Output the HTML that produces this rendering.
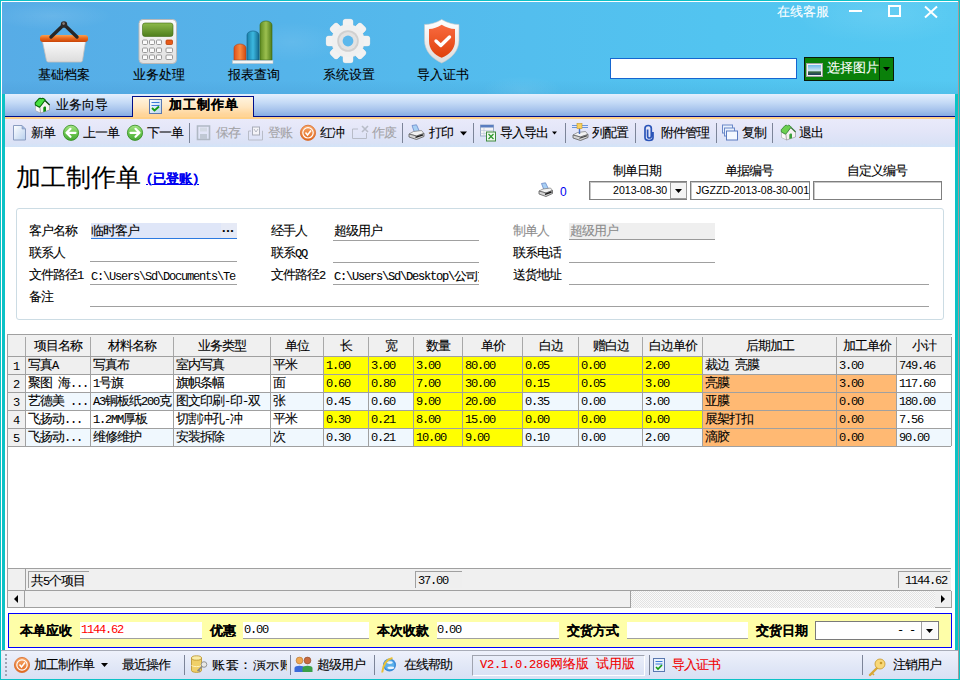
<!DOCTYPE html>
<html><head><meta charset="utf-8">
<style>
@font-face{font-family:"GA";src:local("Liberation Mono");size-adjust:95%;unicode-range:U+0020-007F;}
html,body{margin:0;padding:0;}
body{width:960px;height:680px;position:relative;overflow:hidden;background:#0CC2C6;font-family:"Liberation Sans",sans-serif;font-size:12px;color:#000;}
.a{position:absolute;}
.t{position:absolute;white-space:nowrap;line-height:1;font-family:"GA","Liberation Sans",sans-serif;font-size:12.5px;letter-spacing:-1px;-webkit-text-stroke:0.1px currentColor;}
svg{position:absolute;overflow:visible;}
.mono{font-family:"GA","Liberation Sans",sans-serif;}
.num{-webkit-text-stroke:0;}
/* header */
#hdr{left:1px;top:1px;width:957px;height:93px;background:#fff;}
#sky{left:2px;top:2px;width:956px;height:92px;background:radial-gradient(ellipse 60px 14px at 50px 14px,rgba(255,255,255,0.10),rgba(255,255,255,0) 100%),radial-gradient(ellipse 50px 20px at 290px 40px,rgba(255,255,255,0.08),rgba(255,255,255,0) 100%),radial-gradient(ellipse 90px 30px at 880px 12px,rgba(255,255,255,0.10),rgba(255,255,255,0) 100%),radial-gradient(ellipse 40px 14px at 520px 88px,rgba(255,255,255,0.08),rgba(255,255,255,0) 100%),linear-gradient(rgba(0,60,120,0) 85%,rgba(0,60,120,0.06) 100%),linear-gradient(90deg,#57ACE6 0%,#55B4EA 30%,#53BEEE 55%,#52C4F0 75%,#55C9F2 100%);}
.hl{font-size:13px;color:#000;font-weight:500;letter-spacing:0;}
/* tabs */
#tabbar{left:5px;top:94px;width:950px;height:25px;background:linear-gradient(#E4EFFD,#C4DAF6 35%,#A0BEEA 70%,#86ACE3 88%);}
#tabline{left:5px;top:116px;width:127px;height:1px;background:#000E8A;}
#tabline2{left:253px;top:116px;width:702px;height:1px;background:#000E8A;}
#tabpeach{left:5px;top:117px;width:950px;height:2px;background:#FFD088;}
#acttab{left:132px;top:96px;width:120px;height:20px;border:1px solid #000E8A;border-bottom:none;background:linear-gradient(#FFF4E0,#FFE6C0 50%,#FFD69C 85%,#FFD496);}
/* toolbar */
#tool{left:5px;top:119px;width:950px;height:28px;background:linear-gradient(#E9EAFA,#E4E6F8 40%,#DAE2F6 85%,#D2E4F8);}
.tb{color:#000;}
.dis{color:#A4A4A8;}
.sep{position:absolute;width:1px;height:20px;background:#8A93A8;border-right:1px solid #fff;top:123px;}
/* content */
#content{left:5px;top:147px;width:950px;height:503px;background:#fff;}
</style></head><body>
<div class="a" id="hdr"></div>
<div class="a" id="sky"></div>
<div class="a" id="tabbar"></div>
<div class="a" id="tabline"></div><div class="a" id="tabline2"></div>
<div class="a" id="tabpeach"></div>
<div class="a" id="acttab"></div>
<div class="a" id="tool"></div>
<div class="a" id="content"></div>


<!-- header icons -->
<svg style="left:0;top:0" width="960" height="94" viewBox="0 0 960 94">
 <defs>
  <linearGradient id="bkbody" x1="0" y1="0" x2="0" y2="1"><stop offset="0" stop-color="#FAFAFA"/><stop offset="1" stop-color="#DCDCDC"/></linearGradient>
  <linearGradient id="bkrim" x1="0" y1="0" x2="0" y2="1"><stop offset="0" stop-color="#F8A050"/><stop offset="0.45" stop-color="#EC6A1C"/><stop offset="1" stop-color="#C84408"/></linearGradient>
  <linearGradient id="calc" x1="0" y1="0" x2="0" y2="1"><stop offset="0" stop-color="#FAFAFA"/><stop offset="1" stop-color="#E0E0E0"/></linearGradient>
  <linearGradient id="scr" x1="0" y1="0" x2="0" y2="1"><stop offset="0" stop-color="#8DBA4A"/><stop offset="1" stop-color="#4E7E1C"/></linearGradient>
  <linearGradient id="bo" x1="0" y1="0" x2="1" y2="0"><stop offset="0" stop-color="#E0501A"/><stop offset="0.5" stop-color="#F88A40"/><stop offset="1" stop-color="#D04A10"/></linearGradient>
  <linearGradient id="bb" x1="0" y1="0" x2="1" y2="0"><stop offset="0" stop-color="#1A7FA8"/><stop offset="0.5" stop-color="#3CB8E0"/><stop offset="1" stop-color="#146A90"/></linearGradient>
  <linearGradient id="bg" x1="0" y1="0" x2="1" y2="0"><stop offset="0" stop-color="#5E8A20"/><stop offset="0.5" stop-color="#9CC050"/><stop offset="1" stop-color="#4E7A18"/></linearGradient>
  <linearGradient id="shO" x1="0" y1="0" x2="0" y2="1"><stop offset="0" stop-color="#F86A40"/><stop offset="1" stop-color="#E0400A"/></linearGradient>
  <linearGradient id="shW" x1="0" y1="0" x2="0" y2="1"><stop offset="0" stop-color="#FFFFFF"/><stop offset="1" stop-color="#DCDCDC"/></linearGradient>
 </defs>
 <!-- basket -->
 <path d="M42.5 41.5 L85.5 41.5 L82.5 60.5 Q82.2 62 80.5 62 L48.5 62 Q46.8 62 46.5 60.5 Z" fill="url(#bkbody)" stroke="#C8C0BC" stroke-width="0.8"/>
 <rect x="40" y="35" width="48" height="7" rx="3" fill="url(#bkrim)"/>
 <path d="M51 37 L64 24.5 L77 37" fill="none" stroke="#262626" stroke-width="3.4" stroke-linecap="round" stroke-linejoin="round"/>
 <circle cx="64" cy="24.5" r="3.2" fill="#2E2A28"/><circle cx="63.6" cy="23.6" r="1.3" fill="#8A7E78"/>
 <!-- calculator -->
 <rect x="139" y="19.5" width="37.5" height="44" rx="4" fill="url(#calc)" stroke="#B8B8B8" stroke-width="1"/>
 <rect x="142.5" y="23" width="30.5" height="13.5" rx="2.5" fill="url(#scr)" stroke="#3E6A12" stroke-width="0.6"/>
 <g fill="#FBFBFB" stroke="#8E8E8E" stroke-width="0.9">
  <rect x="142.5" y="40" width="5" height="4.5" rx="1"/><rect x="149.5" y="40" width="5" height="4.5" rx="1"/><rect x="156.5" y="40" width="5" height="4.5" rx="1"/>
  <rect x="142.5" y="48" width="5" height="4.5" rx="1"/><rect x="149.5" y="48" width="5" height="4.5" rx="1"/><rect x="156.5" y="48" width="5" height="4.5" rx="1"/><rect x="166" y="48" width="6.5" height="4.5" rx="1"/>
  <rect x="142.5" y="55" width="5" height="4.5" rx="1"/><rect x="149.5" y="55" width="5" height="4.5" rx="1"/><rect x="156.5" y="55" width="5" height="4.5" rx="1"/><rect x="166" y="55" width="6.5" height="4.5" rx="1"/>
 </g>
 <rect x="166" y="40" width="6.5" height="4.5" rx="1" fill="#E85A18" stroke="#B84008" stroke-width="0.8"/>
 <!-- chart -->
 <path d="M234 60 V48 a6 4 0 0 1 12 0 V60 Z" fill="url(#bo)" stroke="#B84010" stroke-width="0.6"/>
 <path d="M247 60 V35 a6 4 0 0 1 12 0 V60 Z" fill="url(#bb)" stroke="#0E5A80" stroke-width="0.6"/>
 <path d="M260 60 V25 a6 4 0 0 1 12 0 V60 Z" fill="url(#bg)" stroke="#3E6A10" stroke-width="0.6"/>
 <rect x="232.5" y="60.5" width="40.5" height="3" fill="#F4F4F4" stroke="#C0C0C0" stroke-width="0.5"/>
 <!-- gear -->
 <defs><linearGradient id="gearg" x1="0" y1="0" x2="0" y2="1"><stop offset="0" stop-color="#FAFAFA"/><stop offset="1" stop-color="#E4E4E4"/></linearGradient></defs>
 <g transform="translate(348 41)">
  <g fill="url(#gearg)" stroke="#D8D8D8" stroke-width="0.5"><rect x="-5" y="-21.8" width="10" height="9" rx="2.5" transform="rotate(0)"/><rect x="-5" y="-21.8" width="10" height="9" rx="2.5" transform="rotate(45)"/><rect x="-5" y="-21.8" width="10" height="9" rx="2.5" transform="rotate(90)"/><rect x="-5" y="-21.8" width="10" height="9" rx="2.5" transform="rotate(135)"/><rect x="-5" y="-21.8" width="10" height="9" rx="2.5" transform="rotate(180)"/><rect x="-5" y="-21.8" width="10" height="9" rx="2.5" transform="rotate(225)"/><rect x="-5" y="-21.8" width="10" height="9" rx="2.5" transform="rotate(270)"/><rect x="-5" y="-21.8" width="10" height="9" rx="2.5" transform="rotate(315)"/><circle r="16.5"/></g>
  <g fill="#F2F2F2"><rect x="-5" y="-21.8" width="10" height="9.5" rx="2.5" style="stroke:none" transform="rotate(0)"/><rect x="-5" y="-21.8" width="10" height="9.5" rx="2.5" style="stroke:none" transform="rotate(45)"/><rect x="-5" y="-21.8" width="10" height="9.5" rx="2.5" style="stroke:none" transform="rotate(90)"/><rect x="-5" y="-21.8" width="10" height="9.5" rx="2.5" style="stroke:none" transform="rotate(135)"/><rect x="-5" y="-21.8" width="10" height="9.5" rx="2.5" style="stroke:none" transform="rotate(180)"/><rect x="-5" y="-21.8" width="10" height="9.5" rx="2.5" style="stroke:none" transform="rotate(225)"/><rect x="-5" y="-21.8" width="10" height="9.5" rx="2.5" style="stroke:none" transform="rotate(270)"/><rect x="-5" y="-21.8" width="10" height="9.5" rx="2.5" style="stroke:none" transform="rotate(315)"/></g>
  <circle r="16" fill="#F0F0F0"/>
  <circle r="10.8" fill="#D0D0D0"/>
  <circle r="9" fill="#E2E2E2"/>
  <circle r="5.4" fill="#5CB8EC"/>
 </g>
 <!-- shield -->
 <path d="M441.7 19.5 C436 23 430 24.5 424.5 24.5 L424.5 40 C424.5 51 432 58.5 441.7 63 C451.4 58.5 459 51 459 40 L459 24.5 C453.5 24.5 447.5 23 441.7 19.5 Z" fill="url(#shW)" stroke="#C8C8C8" stroke-width="0.6"/>
 <path d="M441.7 24.8 C437.5 27.5 433.5 29 429 29 L429 41 C429 49 434 54.5 441.7 57.8 C449.4 54.5 455 49 455 41 L455 29 C450.5 29 446 27.5 441.7 24.8 Z" fill="url(#shO)"/>
 <path d="M436 41 L440.8 45.5 L449.5 37" fill="none" stroke="#fff" stroke-width="3.4" stroke-linecap="round" stroke-linejoin="round"/>
 <!-- window controls -->
 <rect x="849" y="10" width="13" height="2" fill="#fff"/>
 <rect x="889" y="6" width="11" height="10" fill="none" stroke="#fff" stroke-width="2"/>
 <path d="M925 6.5 L937 17.5 M937 6.5 L925 17.5" stroke="#fff" stroke-width="2"/>
</svg>
<!-- search + button -->
<div class="a" style="left:610px;top:58px;width:185px;height:19px;background:#fff;border:1px solid #1566D0;"></div>
<div class="a" style="left:804px;top:57px;width:88px;height:22px;background:#0A800A;border:1px solid #0A1A0A;"></div>
<div class="a" style="left:879px;top:58px;width:1px;height:22px;background:#063006;"></div>
<svg style="left:806px;top:63px" width="17" height="14" viewBox="0 0 17 14">
 <defs><linearGradient id="pic" x1="0" y1="0" x2="0" y2="1"><stop offset="0" stop-color="#6FB8E8"/><stop offset="0.55" stop-color="#C8E4F0"/><stop offset="0.7" stop-color="#3A6A40"/><stop offset="1" stop-color="#1E3A60"/></linearGradient></defs>
 <rect x="0.5" y="0.5" width="16" height="13" fill="#F0F0F0" stroke="#A0A0A0"/>
 <rect x="2" y="2" width="13" height="10" fill="url(#pic)"/>
</svg>
<div class="t" style="left:827px;top:63px;font-size:13px;letter-spacing:0;color:#fff">选择图片</div>
<svg style="left:883px;top:67px" width="7" height="4" viewBox="0 0 7 4"><path d="M0 0 L7 0 L3.5 4 Z" fill="#000"/></svg>


<!-- left white frame line -->
<div class="a" style="left:1px;top:1px;width:1px;height:649px;background:#fff"></div>
<div class="a" style="left:958px;top:1px;width:1px;height:678px;background:#A49A98"></div>
<!-- tab contents -->
<svg style="left:32px;top:96px" width="20" height="20" viewBox="0 0 20 20">
 <path d="M3.5 9 L8 11.5 L8.5 17 L3.5 14.5 Z" fill="#FAFAFA" stroke="#9A9A9A" stroke-width="0.5"/>
 <path d="M8 11 L13 4.5 L17.5 9 L17.5 14 L8.5 17 Z" fill="#F6F2F2" stroke="#7A7A7A" stroke-width="0.5"/>
 <path d="M13 4.5 L17.6 9" stroke="#0A4A0A" stroke-width="1.3"/>
 <path d="M11.3 16 L11.3 12 C11.3 10.5 14 10 14 11.5 L14 15.2 Z" fill="#0E8A0E"/>
 <path d="M3.2 6.8 L7 2.6 L8.2 2.2 L9.5 2.8 L10.6 2.2 L12 2.8 L13.2 4 L9 9.5 L7.5 11.2 L3.4 9 Z" fill="#48E040" stroke="#0A6A0A" stroke-width="1.1" stroke-linejoin="round"/>
</svg>
<div class="t" style="left:56px;top:100px;font-size:13px;letter-spacing:0;color:#000">业务向导</div>
<svg style="left:149px;top:99px" width="13" height="15" viewBox="0 0 13 15">
 <defs><linearGradient id="doc" x1="0" y1="0" x2="1" y2="1"><stop offset="0" stop-color="#FFFFFF"/><stop offset="1" stop-color="#B8D4F0"/></linearGradient></defs>
 <rect x="0.5" y="0.5" width="12" height="14" fill="url(#doc)" stroke="#5A78B0"/>
 <rect x="2.5" y="3" width="8" height="1" fill="#3A7AD8"/>
 <rect x="2.5" y="6" width="8" height="1" fill="#3A7AD8"/>
 <path d="M3 9 L5.5 11.5 L10 7.5" fill="none" stroke="#139A13" stroke-width="1.8"/>
</svg>
<div class="t" style="left:169px;top:100px;font-size:13px;font-weight:bold;color:#000;letter-spacing:1.1px">加工制作单</div>


<!-- toolbar -->
<svg style="left:0;top:119px" width="960" height="28" viewBox="0 119 960 28">
 <defs>
  <linearGradient id="gcirc" x1="0" y1="0" x2="0" y2="1"><stop offset="0" stop-color="#A8E488"/><stop offset="0.5" stop-color="#6CC850"/><stop offset="1" stop-color="#48A838"/></linearGradient>
  <linearGradient id="ocirc" x1="0" y1="0" x2="0" y2="1"><stop offset="0" stop-color="#F8A868"/><stop offset="1" stop-color="#E06820"/></linearGradient>
  <linearGradient id="ndoc" x1="0" y1="0" x2="1" y2="1"><stop offset="0" stop-color="#FFFFFF"/><stop offset="1" stop-color="#B8D0EE"/></linearGradient>
 </defs>
 <!-- separators -->
 <g fill="#7C8498">
  <rect x="189" y="123" width="1" height="20"/><rect x="402" y="123" width="1" height="20"/><rect x="473" y="123" width="1" height="20"/>
  <rect x="565" y="123" width="1" height="20"/><rect x="635" y="123" width="1" height="20"/><rect x="716" y="123" width="1" height="20"/><rect x="772" y="123" width="1" height="20"/>
 </g>
 <!-- new doc -->
 <path d="M13.5 125.5 L22 125.5 L25.5 129 L25.5 140 L13.5 140 Z" fill="url(#ndoc)" stroke="#8A9CC0" stroke-width="1"/>
 <path d="M22 125.5 L22 129 L25.5 129" fill="#9AB0D8" stroke="#8A9CC0" stroke-width="0.6"/>
 <!-- prev -->
 <circle cx="71" cy="132.8" r="7.6" fill="url(#gcirc)" stroke="#2E8A1A" stroke-width="0.8"/>
 <path d="M67 132.8 L75.5 132.8 M70.5 128.8 L66.5 132.8 L70.5 136.8" fill="none" stroke="#fff" stroke-width="2.2" stroke-linecap="round" stroke-linejoin="round"/>
 <!-- next -->
 <circle cx="135" cy="132.8" r="7.6" fill="url(#gcirc)" stroke="#2E8A1A" stroke-width="0.8"/>
 <path d="M130.5 132.8 L139 132.8 M135.5 128.8 L139.5 132.8 L135.5 136.8" fill="none" stroke="#fff" stroke-width="2.2" stroke-linecap="round" stroke-linejoin="round"/>
 <!-- save (disabled) -->
 <path d="M197.5 126 L209.5 126 L209.5 139.5 L197.5 139.5 Z" fill="none" stroke="#B0B8C4" stroke-width="1.6"/>
 <rect x="200" y="127.5" width="7" height="4" fill="#D4DAE4"/>
 <rect x="200" y="134" width="7" height="5" fill="#C0C8D4"/>
 <!-- post (disabled) -->
 <path d="M248.5 131 L251 131 M262 131 L262.5 131 L262.5 140 L248.5 140 L248.5 131" fill="none" stroke="#B8BCC8" stroke-width="1"/>
 <rect x="252.5" y="127" width="7" height="8" fill="#F4F4F8" stroke="#A8ACB8" stroke-width="1"/>
 <path d="M254 129 L256 132 L258 129" fill="none" stroke="#A8ACB8" stroke-width="0.8"/>
 <!-- red reverse -->
 <circle cx="308" cy="132.8" r="7.6" fill="url(#ocirc)" stroke="#D86A2A" stroke-width="0.8"/>
 <circle cx="308" cy="132.8" r="5.2" fill="none" stroke="#fff" stroke-width="1.2"/>
 <path d="M305.5 132.5 L307.5 135 L311 130.5" fill="none" stroke="#fff" stroke-width="1.5"/>
 <!-- void (disabled) -->
 <path d="M358 129 L352.5 129 L352.5 138.5 L366.5 138.5 L366.5 133" fill="none" stroke="#B8BCC8" stroke-width="1"/>
 <path d="M362 126 L368 132 M368 126 L362 132" stroke="#B8BCC8" stroke-width="1.6"/>
 <!-- print -->
 <g transform="translate(408 124)">
 <path d="M4 1.5 L8.5 0.8 L11.5 7.5 L6.5 8.5 Z" fill="#A8D0F4" stroke="#6A88C8" stroke-width="0.8"/>
 <path d="M1 10 L5.5 7.5 L13.5 6.5 L16 9.5 L8.5 12 Z" fill="#F2F2F2" stroke="#7A7A7A" stroke-width="0.7"/>
 <path d="M1 10 L8.5 12 L16 9.5 L16 12.5 L8.5 15.5 L1 13 Z" fill="#D4D4D4" stroke="#5A5A5A" stroke-width="0.8"/>
 <path d="M7.5 13.3 L15 10.8" stroke="#1A1A1A" stroke-width="1.4"/>
 </g>
 <path d="M460 131.5 L467 131.5 L463.5 135.5 Z" fill="#000"/>
 <!-- import/export -->
 <rect x="480.5" y="125" width="13" height="11" fill="#F4F4F4" stroke="#9AACC8" stroke-width="1"/>
 <rect x="480.5" y="125" width="13" height="2.5" fill="#5A7EC0"/>
 <path d="M484 127.5 L484 136 M480.5 130.5 L493.5 130.5 M480.5 133.5 L493.5 133.5" stroke="#B8C4D8" stroke-width="0.6"/>
 <rect x="486.5" y="132" width="9" height="9" fill="#F0F8EE" stroke="#3E8A3E" stroke-width="1"/>
 <path d="M488.5 134 L493.5 139 M493.5 134 L488.5 139" stroke="#2E9A2E" stroke-width="1.3"/>
 <path d="M552 131.5 L557 131.5 L554.5 134.5 Z" fill="#000"/>
 <!-- column config -->
 <path d="M572 125.5 L588 125.5 M572 127.5 L588 127.5" stroke="#5A8AD8" stroke-width="0.9"/>
 <g transform="translate(572 125)">
 <path d="M1 10 L5.5 7.5 L13.5 6.5 L16 9.5 L8.5 12 Z" fill="#F2F2F2" stroke="#7A7A7A" stroke-width="0.7"/>
 <path d="M1 10 L8.5 12 L16 9.5 L16 12.5 L8.5 15.5 L1 13 Z" fill="#D4D4D4" stroke="#5A5A5A" stroke-width="0.8"/>
 <path d="M7.5 13.3 L15 10.8" stroke="#3A3A3A" stroke-width="1"/>
 </g>
 <path d="M579.5 128 L579.5 134" stroke="#4A70C0" stroke-width="1.4"/>
 <rect x="577" y="123.5" width="5" height="5" fill="#F8D060" stroke="#C89A20" stroke-width="0.6"/>
 <!-- attach -->
 <path d="M653 132 L653 137.5 Q653 140.5 649 140.5 Q645 140.5 645 137.5 L645 128.2 Q645 125.5 648.3 125.5 Q651.3 125.5 651.3 128.2 L651.3 136.3 Q651.3 138 649.3 138 Q647.6 138 647.6 136.3 L647.6 129.5" fill="none" stroke="#2A54B8" stroke-width="1.7"/>
 <!-- copy -->
 <rect x="722.5" y="125" width="10" height="8" fill="#E8F0FC" stroke="#6A88C8" stroke-width="1"/>
 <rect x="724.5" y="128" width="10" height="8" fill="#E8F0FC" stroke="#6A88C8" stroke-width="1"/>
 <rect x="726.5" y="131" width="11" height="9" fill="#F4F8FF" stroke="#5A7AC0" stroke-width="1"/>
 <!-- exit house -->
 <g transform="translate(778 123)">
 <path d="M3.5 9 L8 11.5 L8.5 17 L3.5 14.5 Z" fill="#FAFAFA" stroke="#9A9A9A" stroke-width="0.5"/>
 <path d="M8 11 L13 4.5 L17.5 9 L17.5 14 L8.5 17 Z" fill="#F6F2F2" stroke="#7A7A7A" stroke-width="0.5"/>
 <path d="M13 4.5 L17.6 9" stroke="#3A7A3A" stroke-width="1.2"/>
 <path d="M11.3 16 L11.3 12 C11.3 10.5 14 10 14 11.5 L14 15.2 Z" fill="#3AA03A"/>
 <path d="M3.2 6.8 L7 2.6 L8.2 2.2 L9.5 2.8 L10.6 2.2 L12 2.8 L13.2 4 L9 9.5 L7.5 11.2 L3.4 9 Z" fill="#6CD050" stroke="#3A8A3A" stroke-width="0.9" stroke-linejoin="round"/>
 </g>
</svg>
<div class="t tb" style="left:31px;top:128px">新单</div>
<div class="t tb" style="left:83px;top:128px">上一单</div>
<div class="t tb" style="left:147px;top:128px">下一单</div>
<div class="t tb dis" style="left:216px;top:128px">保存</div>
<div class="t tb dis" style="left:268px;top:128px">登账</div>
<div class="t tb" style="left:320px;top:128px">红冲</div>
<div class="t tb dis" style="left:372px;top:128px">作废</div>
<div class="t tb" style="left:429px;top:128px">打印</div>
<div class="t tb" style="left:500px;top:128px">导入导出</div>
<div class="t tb" style="left:592px;top:128px">列配置</div>
<div class="t tb" style="left:661px;top:128px">附件管理</div>
<div class="t tb" style="left:742px;top:128px">复制</div>
<div class="t tb" style="left:799px;top:128px">退出</div>


<!-- form title -->
<div class="t" style="left:16px;top:167px;font-size:25px;letter-spacing:0;color:#000;font-weight:500">加工制作单</div>
<div class="t" style="left:146px;top:174px;font-weight:bold;color:#0000F0;text-decoration:underline;letter-spacing:0">(已登账)</div>
<!-- printer small -->
<svg style="left:538px;top:182px" width="18" height="16" viewBox="0 0 18 16">
 <path d="M3.5 1.5 L7.5 0.8 L10.5 7 L6 8 Z" fill="#A8D0F4" stroke="#6A88C8" stroke-width="0.8"/>
 <path d="M1 9 L5 7 L12.5 6 L14.5 8.5 L8 11 Z" fill="#F2F2F2" stroke="#7A7A7A" stroke-width="0.7"/>
 <path d="M1 9 L8 11 L14.5 8.5 L14.5 11.5 L8 14.5 L1 12 Z" fill="#D4D4D4" stroke="#5A5A5A" stroke-width="0.8"/>
 <path d="M7 12.3 L13.5 10" stroke="#1A1A1A" stroke-width="1.4"/>
</svg>
<div class="t num" style="left:560px;top:186px;color:#0000F0;font-family:'Liberation Sans';font-size:12px;letter-spacing:0">0</div>
<div class="t" style="left:613px;top:166px">制单日期</div>
<div class="t" style="left:725px;top:166px">单据编号</div>
<div class="t" style="left:847px;top:166px">自定义编号</div>
<!-- date box -->
<div class="a" style="left:589px;top:181px;width:96px;height:17px;border:1px solid #7F7F7F;box-shadow:inset 1px 1px 0 #C8C8C8;background:#fff"></div>
<div class="t num" style="left:613px;top:185px;font-size:10.6px;letter-spacing:0;font-family:'Liberation Sans'">2013-08-30</div>
<div class="a" style="left:670px;top:182px;width:17px;height:17px;border:1px solid #9A9A9A;background:#F4F4F4;box-sizing:border-box"></div>
<svg style="left:675px;top:189px" width="7" height="4" viewBox="0 0 7 4"><path d="M0 0 L7 0 L3.5 4 Z" fill="#000"/></svg>
<div class="a" style="left:690px;top:181px;width:118px;height:17px;border:1px solid #7F7F7F;box-shadow:inset 1px 1px 0 #C8C8C8;background:#fff"></div>
<div class="t num" style="left:696px;top:185px;font-size:10.6px;letter-spacing:0;font-family:'Liberation Sans'">JGZZD-2013-08-30-001</div>
<div class="a" style="left:813px;top:181px;width:127px;height:17px;border:1px solid #7F7F7F;box-shadow:inset 1px 1px 0 #C8C8C8;background:#fff"></div>
<!-- form box -->
<div class="a" style="left:16px;top:208px;width:926px;height:110px;border:1px solid #CCDCE4;border-radius:3px;"></div>
<div class="t" style="left:29px;top:226px">客户名称</div>
<div class="t" style="left:29px;top:248px">联系人</div>
<div class="t mono" style="left:29px;top:270px">文件路径1</div>
<div class="t" style="left:29px;top:292px">备注</div>
<div class="a" style="left:91px;top:223px;width:146px;height:15px;background:#DFE6F8;border-bottom:1px solid #2C7AE0"></div><div class="a" style="left:221px;top:223px;width:16px;height:15px;background:#E6EAF6"></div>
<div class="t" style="left:91px;top:226px">临时客户</div>
<div class="t" style="left:222px;top:226px;font-weight:bold;letter-spacing:0px">···</div>
<div class="a" style="left:90px;top:261px;width:147px;height:1px;background:#A0A0A0"></div>
<div class="t mono num" style="left:91px;top:271px;width:146px;overflow:hidden">C:\Users\Sd\Documents\Te</div>
<div class="a" style="left:90px;top:284px;width:147px;height:1px;background:#A0A0A0"></div>
<div class="a" style="left:90px;top:306px;width:839px;height:1px;background:#A0A0A0"></div>

<div class="t" style="left:271px;top:226px">经手人</div>
<div class="t" style="left:271px;top:248px">联系QQ</div>
<div class="t mono" style="left:271px;top:270px">文件路径2</div>
<div class="t" style="left:334px;top:226px">超级用户</div>
<div class="a" style="left:333px;top:240px;width:146px;height:1px;background:#A0A0A0"></div>
<div class="a" style="left:333px;top:262px;width:146px;height:1px;background:#A0A0A0"></div>
<div class="t mono" style="left:334px;top:271px;width:145px;overflow:hidden">C:\Users\Sd\Desktop\公司文件</div>
<div class="a" style="left:333px;top:284px;width:146px;height:1px;background:#A0A0A0"></div>

<div class="t" style="left:513px;top:226px;color:#8C8C8C">制单人</div>
<div class="t" style="left:513px;top:248px">联系电话</div>
<div class="t" style="left:513px;top:270px">送货地址</div>
<div class="a" style="left:569px;top:223px;width:146px;height:16px;background:#EFEFEF;border-bottom:1px solid #9A9A9A"></div>
<div class="t" style="left:570px;top:226px;color:#8C8C8C">超级用户</div>
<div class="a" style="left:569px;top:262px;width:146px;height:1px;background:#A0A0A0"></div>
<div class="a" style="left:569px;top:284px;width:360px;height:1px;background:#A0A0A0"></div>

<!-- grid -->
<div class="a" style="left:7px;top:334px;width:944px;height:273px;border:1px solid #A0A0A0;border-right:none;border-bottom:none;background:#fff"></div>
<div class="a" style="left:8px;top:335px;width:943px;height:21px;background:#F0F0F0"></div>
<div class="a" style="left:951px;top:337px;width:1px;height:109px;background:#A0A0A0"></div>
<div class="a" style="left:8px;top:356px;width:943px;height:1px;background:#A0A0A0"></div>
<div class="a" style="left:25px;top:337px;width:1px;height:19px;background:#A8A8A8"></div>
<div class="t" style="left:26px;top:341px;width:64px;text-align:center">项目名称</div>
<div class="a" style="left:90px;top:337px;width:1px;height:19px;background:#A8A8A8"></div>
<div class="t" style="left:91px;top:341px;width:82px;text-align:center">材料名称</div>
<div class="a" style="left:173px;top:337px;width:1px;height:19px;background:#A8A8A8"></div>
<div class="t" style="left:174px;top:341px;width:96px;text-align:center">业务类型</div>
<div class="a" style="left:270px;top:337px;width:1px;height:19px;background:#A8A8A8"></div>
<div class="t" style="left:271px;top:341px;width:52px;text-align:center">单位</div>
<div class="a" style="left:323px;top:337px;width:1px;height:19px;background:#A8A8A8"></div>
<div class="t" style="left:324px;top:341px;width:44px;text-align:center">长</div>
<div class="a" style="left:368px;top:337px;width:1px;height:19px;background:#A8A8A8"></div>
<div class="t" style="left:369px;top:341px;width:44px;text-align:center">宽</div>
<div class="a" style="left:413px;top:337px;width:1px;height:19px;background:#A8A8A8"></div>
<div class="t" style="left:414px;top:341px;width:48px;text-align:center">数量</div>
<div class="a" style="left:462px;top:337px;width:1px;height:19px;background:#A8A8A8"></div>
<div class="t" style="left:463px;top:341px;width:59px;text-align:center">单价</div>
<div class="a" style="left:522px;top:337px;width:1px;height:19px;background:#A8A8A8"></div>
<div class="t" style="left:523px;top:341px;width:55px;text-align:center">白边</div>
<div class="a" style="left:578px;top:337px;width:1px;height:19px;background:#A8A8A8"></div>
<div class="t" style="left:579px;top:341px;width:63px;text-align:center">赠白边</div>
<div class="a" style="left:642px;top:337px;width:1px;height:19px;background:#A8A8A8"></div>
<div class="t" style="left:643px;top:341px;width:59px;text-align:center">白边单价</div>
<div class="a" style="left:702px;top:337px;width:1px;height:19px;background:#A8A8A8"></div>
<div class="t" style="left:703px;top:341px;width:133px;text-align:center">后期加工</div>
<div class="a" style="left:836px;top:337px;width:1px;height:19px;background:#A8A8A8"></div>
<div class="t" style="left:837px;top:341px;width:59px;text-align:center">加工单价</div>
<div class="a" style="left:896px;top:337px;width:1px;height:19px;background:#A8A8A8"></div>
<div class="t" style="left:897px;top:341px;width:54px;text-align:center">小计</div>
<div class="a" style="left:8px;top:357px;width:17px;height:17px;background:#F0F0F0"></div>
<div class="t mono num" style="left:13px;top:361px">1</div>
<div class="a" style="left:26px;top:357px;width:64px;height:17px;background:#EFEFEF"></div>
<div class="t mono" style="left:28px;top:360px">写真A</div>
<div class="a" style="left:91px;top:357px;width:82px;height:17px;background:#EFEFEF"></div>
<div class="t mono" style="left:93px;top:360px">写真布</div>
<div class="a" style="left:174px;top:357px;width:96px;height:17px;background:#EFEFEF"></div>
<div class="t mono" style="left:176px;top:360px">室内写真</div>
<div class="a" style="left:271px;top:357px;width:52px;height:17px;background:#EFEFEF"></div>
<div class="t mono" style="left:273px;top:360px">平米</div>
<div class="a" style="left:324px;top:357px;width:44px;height:17px;background:#FFFF00"></div>
<div class="t mono num" style="left:326px;top:360px">1.00</div>
<div class="a" style="left:369px;top:357px;width:44px;height:17px;background:#FFFF00"></div>
<div class="t mono num" style="left:371px;top:360px">3.00</div>
<div class="a" style="left:414px;top:357px;width:48px;height:17px;background:#FFFF00"></div>
<div class="t mono num" style="left:416px;top:360px">3.00</div>
<div class="a" style="left:463px;top:357px;width:59px;height:17px;background:#FFFF00"></div>
<div class="t mono num" style="left:465px;top:360px">80.00</div>
<div class="a" style="left:523px;top:357px;width:55px;height:17px;background:#FFFF00"></div>
<div class="t mono num" style="left:525px;top:360px">0.05</div>
<div class="a" style="left:579px;top:357px;width:63px;height:17px;background:#FFFF00"></div>
<div class="t mono num" style="left:581px;top:360px">0.00</div>
<div class="a" style="left:643px;top:357px;width:59px;height:17px;background:#FFFF00"></div>
<div class="t mono num" style="left:645px;top:360px">2.00</div>
<div class="a" style="left:703px;top:357px;width:133px;height:17px;background:#EFEFEF"></div>
<div class="t mono" style="left:705px;top:360px">裁边 亮膜</div>
<div class="a" style="left:837px;top:357px;width:59px;height:17px;background:#EFEFEF"></div>
<div class="t mono num" style="left:839px;top:360px">3.00</div>
<div class="a" style="left:897px;top:357px;width:54px;height:17px;background:#EFEFEF"></div>
<div class="t mono num" style="left:899px;top:360px">749.46</div>
<div class="a" style="left:8px;top:374px;width:943px;height:1px;background:#A0A0A0"></div>
<div class="a" style="left:8px;top:375px;width:17px;height:17px;background:#F0F0F0"></div>
<div class="t mono num" style="left:13px;top:379px">2</div>
<div class="a" style="left:26px;top:375px;width:64px;height:17px;background:#FFFFFF"></div>
<div class="t mono" style="left:28px;top:378px">聚图 海...</div>
<div class="a" style="left:91px;top:375px;width:82px;height:17px;background:#FFFFFF"></div>
<div class="t mono" style="left:93px;top:378px">1号旗</div>
<div class="a" style="left:174px;top:375px;width:96px;height:17px;background:#FFFFFF"></div>
<div class="t mono" style="left:176px;top:378px">旗帜条幅</div>
<div class="a" style="left:271px;top:375px;width:52px;height:17px;background:#FFFFFF"></div>
<div class="t mono" style="left:273px;top:378px">面</div>
<div class="a" style="left:324px;top:375px;width:44px;height:17px;background:#FFFF00"></div>
<div class="t mono num" style="left:326px;top:378px">0.60</div>
<div class="a" style="left:369px;top:375px;width:44px;height:17px;background:#FFFF00"></div>
<div class="t mono num" style="left:371px;top:378px">0.80</div>
<div class="a" style="left:414px;top:375px;width:48px;height:17px;background:#FFFF00"></div>
<div class="t mono num" style="left:416px;top:378px">7.00</div>
<div class="a" style="left:463px;top:375px;width:59px;height:17px;background:#FFFF00"></div>
<div class="t mono num" style="left:465px;top:378px">30.00</div>
<div class="a" style="left:523px;top:375px;width:55px;height:17px;background:#FFFF00"></div>
<div class="t mono num" style="left:525px;top:378px">0.15</div>
<div class="a" style="left:579px;top:375px;width:63px;height:17px;background:#FFFF00"></div>
<div class="t mono num" style="left:581px;top:378px">0.05</div>
<div class="a" style="left:643px;top:375px;width:59px;height:17px;background:#FFFF00"></div>
<div class="t mono num" style="left:645px;top:378px">3.00</div>
<div class="a" style="left:703px;top:375px;width:133px;height:17px;background:#FFB973"></div>
<div class="t mono" style="left:705px;top:378px">亮膜</div>
<div class="a" style="left:837px;top:375px;width:59px;height:17px;background:#FFB973"></div>
<div class="t mono num" style="left:839px;top:378px">3.00</div>
<div class="a" style="left:897px;top:375px;width:54px;height:17px;background:#FFFFFF"></div>
<div class="t mono num" style="left:899px;top:378px">117.60</div>
<div class="a" style="left:8px;top:392px;width:943px;height:1px;background:#A0A0A0"></div>
<div class="a" style="left:8px;top:393px;width:17px;height:17px;background:#F0F0F0"></div>
<div class="t mono num" style="left:13px;top:397px">3</div>
<div class="a" style="left:26px;top:393px;width:64px;height:17px;background:#F0F8FE"></div>
<div class="t mono" style="left:28px;top:396px">艺德美 ...</div>
<div class="a" style="left:91px;top:393px;width:82px;height:17px;background:#F0F8FE"></div>
<div class="t mono" style="left:93px;top:396px">A3铜板纸200克</div>
<div class="a" style="left:174px;top:393px;width:96px;height:17px;background:#F0F8FE"></div>
<div class="t mono" style="left:176px;top:396px">图文印刷-印-双</div>
<div class="a" style="left:271px;top:393px;width:52px;height:17px;background:#F0F8FE"></div>
<div class="t mono" style="left:273px;top:396px">张</div>
<div class="a" style="left:324px;top:393px;width:44px;height:17px;background:#F0F8FE"></div>
<div class="t mono num" style="left:326px;top:396px">0.45</div>
<div class="a" style="left:369px;top:393px;width:44px;height:17px;background:#F0F8FE"></div>
<div class="t mono num" style="left:371px;top:396px">0.60</div>
<div class="a" style="left:414px;top:393px;width:48px;height:17px;background:#FFFF00"></div>
<div class="t mono num" style="left:416px;top:396px">9.00</div>
<div class="a" style="left:463px;top:393px;width:59px;height:17px;background:#FFFF00"></div>
<div class="t mono num" style="left:465px;top:396px">20.00</div>
<div class="a" style="left:523px;top:393px;width:55px;height:17px;background:#F0F8FE"></div>
<div class="t mono num" style="left:525px;top:396px">0.35</div>
<div class="a" style="left:579px;top:393px;width:63px;height:17px;background:#F0F8FE"></div>
<div class="t mono num" style="left:581px;top:396px">0.00</div>
<div class="a" style="left:643px;top:393px;width:59px;height:17px;background:#F0F8FE"></div>
<div class="t mono num" style="left:645px;top:396px">3.00</div>
<div class="a" style="left:703px;top:393px;width:133px;height:17px;background:#FFB973"></div>
<div class="t mono" style="left:705px;top:396px">亚膜</div>
<div class="a" style="left:837px;top:393px;width:59px;height:17px;background:#FFB973"></div>
<div class="t mono num" style="left:839px;top:396px">0.00</div>
<div class="a" style="left:897px;top:393px;width:54px;height:17px;background:#F0F8FE"></div>
<div class="t mono num" style="left:899px;top:396px">180.00</div>
<div class="a" style="left:8px;top:410px;width:943px;height:1px;background:#A0A0A0"></div>
<div class="a" style="left:8px;top:411px;width:17px;height:17px;background:#F0F0F0"></div>
<div class="t mono num" style="left:13px;top:415px">4</div>
<div class="a" style="left:26px;top:411px;width:64px;height:17px;background:#FFFFFF"></div>
<div class="t mono" style="left:28px;top:414px">飞扬动...</div>
<div class="a" style="left:91px;top:411px;width:82px;height:17px;background:#FFFFFF"></div>
<div class="t mono" style="left:93px;top:414px">1.2MM厚板</div>
<div class="a" style="left:174px;top:411px;width:96px;height:17px;background:#FFFFFF"></div>
<div class="t mono" style="left:176px;top:414px">切割冲孔-冲</div>
<div class="a" style="left:271px;top:411px;width:52px;height:17px;background:#FFFFFF"></div>
<div class="t mono" style="left:273px;top:414px">平米</div>
<div class="a" style="left:324px;top:411px;width:44px;height:17px;background:#FFFF00"></div>
<div class="t mono num" style="left:326px;top:414px">0.30</div>
<div class="a" style="left:369px;top:411px;width:44px;height:17px;background:#FFFF00"></div>
<div class="t mono num" style="left:371px;top:414px">0.21</div>
<div class="a" style="left:414px;top:411px;width:48px;height:17px;background:#FFFF00"></div>
<div class="t mono num" style="left:416px;top:414px">8.00</div>
<div class="a" style="left:463px;top:411px;width:59px;height:17px;background:#FFFF00"></div>
<div class="t mono num" style="left:465px;top:414px">15.00</div>
<div class="a" style="left:523px;top:411px;width:55px;height:17px;background:#FFFF00"></div>
<div class="t mono num" style="left:525px;top:414px">0.00</div>
<div class="a" style="left:579px;top:411px;width:63px;height:17px;background:#FFFF00"></div>
<div class="t mono num" style="left:581px;top:414px">0.00</div>
<div class="a" style="left:643px;top:411px;width:59px;height:17px;background:#FFFF00"></div>
<div class="t mono num" style="left:645px;top:414px">0.00</div>
<div class="a" style="left:703px;top:411px;width:133px;height:17px;background:#FFB973"></div>
<div class="t mono" style="left:705px;top:414px">展架打扣</div>
<div class="a" style="left:837px;top:411px;width:59px;height:17px;background:#FFB973"></div>
<div class="t mono num" style="left:839px;top:414px">0.00</div>
<div class="a" style="left:897px;top:411px;width:54px;height:17px;background:#FFFFFF"></div>
<div class="t mono num" style="left:899px;top:414px">7.56</div>
<div class="a" style="left:8px;top:428px;width:943px;height:1px;background:#A0A0A0"></div>
<div class="a" style="left:8px;top:429px;width:17px;height:17px;background:#F0F0F0"></div>
<div class="t mono num" style="left:13px;top:433px">5</div>
<div class="a" style="left:26px;top:429px;width:64px;height:17px;background:#F0F8FE"></div>
<div class="t mono" style="left:28px;top:432px">飞扬动...</div>
<div class="a" style="left:91px;top:429px;width:82px;height:17px;background:#F0F8FE"></div>
<div class="t mono" style="left:93px;top:432px">维修维护</div>
<div class="a" style="left:174px;top:429px;width:96px;height:17px;background:#F0F8FE"></div>
<div class="t mono" style="left:176px;top:432px">安装拆除</div>
<div class="a" style="left:271px;top:429px;width:52px;height:17px;background:#F0F8FE"></div>
<div class="t mono" style="left:273px;top:432px">次</div>
<div class="a" style="left:324px;top:429px;width:44px;height:17px;background:#F0F8FE"></div>
<div class="t mono num" style="left:326px;top:432px">0.30</div>
<div class="a" style="left:369px;top:429px;width:44px;height:17px;background:#F0F8FE"></div>
<div class="t mono num" style="left:371px;top:432px">0.21</div>
<div class="a" style="left:414px;top:429px;width:48px;height:17px;background:#FFFF00"></div>
<div class="t mono num" style="left:416px;top:432px">10.00</div>
<div class="a" style="left:463px;top:429px;width:59px;height:17px;background:#FFFF00"></div>
<div class="t mono num" style="left:465px;top:432px">9.00</div>
<div class="a" style="left:523px;top:429px;width:55px;height:17px;background:#F0F8FE"></div>
<div class="t mono num" style="left:525px;top:432px">0.10</div>
<div class="a" style="left:579px;top:429px;width:63px;height:17px;background:#F0F8FE"></div>
<div class="t mono num" style="left:581px;top:432px">0.00</div>
<div class="a" style="left:643px;top:429px;width:59px;height:17px;background:#F0F8FE"></div>
<div class="t mono num" style="left:645px;top:432px">2.00</div>
<div class="a" style="left:703px;top:429px;width:133px;height:17px;background:#FFB973"></div>
<div class="t mono" style="left:705px;top:432px">滴胶</div>
<div class="a" style="left:837px;top:429px;width:59px;height:17px;background:#FFB973"></div>
<div class="t mono num" style="left:839px;top:432px">0.00</div>
<div class="a" style="left:897px;top:429px;width:54px;height:17px;background:#F0F8FE"></div>
<div class="t mono num" style="left:899px;top:432px">90.00</div>
<div class="a" style="left:8px;top:446px;width:943px;height:1px;background:#A0A0A0"></div>
<div class="a" style="left:25px;top:357px;width:1px;height:89px;background:#A0A0A0"></div>
<div class="a" style="left:90px;top:357px;width:1px;height:89px;background:#A0A0A0"></div>
<div class="a" style="left:173px;top:357px;width:1px;height:89px;background:#A0A0A0"></div>
<div class="a" style="left:270px;top:357px;width:1px;height:89px;background:#A0A0A0"></div>
<div class="a" style="left:323px;top:357px;width:1px;height:89px;background:#A0A0A0"></div>
<div class="a" style="left:368px;top:357px;width:1px;height:89px;background:#A0A0A0"></div>
<div class="a" style="left:413px;top:357px;width:1px;height:89px;background:#A0A0A0"></div>
<div class="a" style="left:462px;top:357px;width:1px;height:89px;background:#A0A0A0"></div>
<div class="a" style="left:522px;top:357px;width:1px;height:89px;background:#A0A0A0"></div>
<div class="a" style="left:578px;top:357px;width:1px;height:89px;background:#A0A0A0"></div>
<div class="a" style="left:642px;top:357px;width:1px;height:89px;background:#A0A0A0"></div>
<div class="a" style="left:702px;top:357px;width:1px;height:89px;background:#A0A0A0"></div>
<div class="a" style="left:836px;top:357px;width:1px;height:89px;background:#A0A0A0"></div>
<div class="a" style="left:896px;top:357px;width:1px;height:89px;background:#A0A0A0"></div>
<div class="a" style="left:8px;top:568px;width:943px;height:1px;background:#A0A0A0"></div>
<div class="a" style="left:8px;top:569px;width:943px;height:21px;background:#F0F0F0"></div>
<div class="a" style="left:25px;top:569px;width:1px;height:21px;background:#A0A0A0"></div>
<div class="a" style="left:8px;top:590px;width:943px;height:1px;background:#A0A0A0"></div>
<div class="a" style="left:28px;top:571px;width:60px;height:16px;border-top:1px solid #A0A0A0;border-left:1px solid #A0A0A0;background:#EFEFEF"></div>
<div class="t mono" style="left:31px;top:576px">共5个项目</div>
<div class="a" style="left:415px;top:571px;width:46px;height:16px;border-top:1px solid #A0A0A0;border-left:1px solid #A0A0A0;background:#EFEFEF"></div>
<div class="t mono num" style="left:418px;top:575px">37.00</div>
<div class="a" style="left:898px;top:571px;width:51px;height:16px;border-top:1px solid #A0A0A0;border-left:1px solid #A0A0A0;background:#EFEFEF"></div>
<div class="t mono num" style="left:905px;top:575px">1144.62</div>
<div class="a" style="left:8px;top:591px;width:943px;height:16px;background:#F0F0F0"></div>
<div class="a" style="left:631px;top:591px;width:304px;height:17px;background:repeating-conic-gradient(#FAFAFA 0 25%,#E2E2E2 0 50%) 0 0/2px 2px"></div>
<div class="a" style="left:24px;top:591px;width:1px;height:16px;background:#A0A0A0"></div>
<div class="a" style="left:7px;top:607px;width:624px;height:1px;background:#A0A0A0"></div>
<div class="a" style="left:630px;top:591px;width:1px;height:17px;background:#A0A0A0"></div>
<div class="a" style="left:935px;top:607px;width:17px;height:1px;background:#A0A0A0"></div>
<div class="a" style="left:951px;top:591px;width:1px;height:17px;background:#A0A0A0"></div>
<svg style="left:13px;top:595px" width="6" height="9" viewBox="0 0 6 9"><path d="M5 0 L5 8 L1 4 Z" fill="#000"/></svg>
<svg style="left:940px;top:595px" width="6" height="9" viewBox="0 0 6 9"><path d="M1 0 L1 8 L5 4 Z" fill="#000"/></svg>

<!-- totals panel -->
<div class="a" style="left:8px;top:613px;width:942px;height:33px;border:1px solid #0000FF;background:#FEFEA8"></div>
<div class="t" style="left:20px;top:626px;font-weight:bold;letter-spacing:0">本单应收</div>
<div class="a" style="left:80px;top:622px;width:122px;height:16px;background:#fff;border-bottom:1px solid #A0A0A0"></div>
<div class="t mono num" style="left:81px;top:624px;color:#FF0000">1144.62</div>
<div class="t" style="left:210px;top:626px;font-weight:bold;letter-spacing:0">优惠</div>
<div class="a" style="left:243px;top:622px;width:126px;height:16px;background:#fff;border-bottom:1px solid #A0A0A0"></div>
<div class="t mono num" style="left:244px;top:624px">0.00</div>
<div class="t" style="left:377px;top:626px;font-weight:bold;letter-spacing:0">本次收款</div>
<div class="a" style="left:437px;top:622px;width:122px;height:16px;background:#fff;border-bottom:1px solid #A0A0A0"></div>
<div class="t mono num" style="left:437px;top:624px">0.00</div>
<div class="t" style="left:567px;top:626px;font-weight:bold;letter-spacing:0">交货方式</div>
<div class="a" style="left:627px;top:622px;width:121px;height:16px;background:#fff;border-bottom:1px solid #A0A0A0"></div>
<div class="t" style="left:756px;top:626px;font-weight:bold;letter-spacing:0">交货日期</div>
<div class="a" style="left:815px;top:621px;width:122px;height:17px;background:#fff;border:1px solid #7A7A7A"></div>
<div class="t mono num" style="left:897px;top:625px">- -</div>
<div class="a" style="left:921px;top:622px;width:16px;height:17px;border-left:1px solid #A0A0A0;background:#FAFAFA;box-sizing:border-box"></div>
<svg style="left:926px;top:629px" width="7" height="4" viewBox="0 0 7 4"><path d="M0 0 L7 0 L3.5 4 Z" fill="#000"/></svg>

<!-- status bar -->
<div class="a" style="left:1px;top:650px;width:957px;height:1px;background:#A8ACB8"></div>
<div class="a" style="left:1px;top:651px;width:957px;height:28px;background:linear-gradient(#EEF1FB,#E2E8F7 50%,#D8E0F4)"></div>
<div class="a" style="left:0px;top:679px;width:960px;height:1px;background:#0CC2C6"></div>
<svg style="left:0;top:650px" width="960" height="30" viewBox="0 650 960 30">
 <g fill="#A0A4B4"><rect x="5" y="654" width="2" height="2"/><rect x="5" y="658" width="2" height="2"/><rect x="5" y="662" width="2" height="2"/><rect x="5" y="666" width="2" height="2"/><rect x="5" y="670" width="2" height="2"/><rect x="5" y="674" width="2" height="2"/></g>
 <g fill="#7C8498"><rect x="184" y="655" width="1" height="20"/><rect x="290" y="655" width="1" height="20"/><rect x="374" y="655" width="1" height="20"/><rect x="649" y="655" width="1" height="20"/><rect x="862" y="655" width="1" height="20"/></g>
 <circle cx="22" cy="665" r="7.6" fill="url(#ocirc)" stroke="#D86A2A" stroke-width="0.8"/>
 <circle cx="22" cy="665" r="5.2" fill="none" stroke="#fff" stroke-width="1.2"/>
 <path d="M19.5 664.5 L21.5 667 L25 662.5" fill="none" stroke="#fff" stroke-width="1.5"/>
 <path d="M101 663 L108 663 L104.5 667 Z" fill="#000"/>
 <!-- account icon -->
 <path d="M191.5 658 L191.5 670.5 C191.5 673 201.5 673 201.5 670.5 L201.5 658 Z" fill="#F0D068" stroke="#B89028" stroke-width="0.8"/>
 <ellipse cx="196.5" cy="658" rx="5" ry="2.2" fill="#FAECA8" stroke="#B89028" stroke-width="0.8"/>
 <path d="M191.5 665.5 C193 667 200 667 201.5 665.5" fill="none" stroke="#FFF4C0" stroke-width="1"/>
 <circle cx="204" cy="664.5" r="2.8" fill="#E8E8E8" stroke="#8A8A8A" stroke-width="0.9"/>
 <path d="M202 666.5 L197.5 671 M198.5 670 L200 671.5" stroke="#8A8A8A" stroke-width="1.6"/>
 <!-- users icon -->
 <circle cx="299.5" cy="660.5" r="3.4" fill="#F0A850" stroke="#B07030" stroke-width="0.6"/>
 <path d="M294.5 672 L294.5 668 C294.5 665 304.5 665 304.5 668 L304.5 672 Z" fill="#3A6AD8"/>
 <circle cx="307.5" cy="660.5" r="3.4" fill="#C86A40" stroke="#8A4A2A" stroke-width="0.6"/>
 <path d="M302.5 672 L302.5 668 C302.5 665 312.5 665 312.5 668 L312.5 672 Z" fill="#3AA048"/>
 <!-- IE icon -->
 <circle cx="389.5" cy="665" r="6.5" fill="#3A8AD8"/>
 <circle cx="389.5" cy="665" r="5" fill="#5AB0EA"/>
 <ellipse cx="389.8" cy="662.6" rx="3" ry="1.4" fill="#EAF4FC"/>
 <ellipse cx="390.8" cy="667.7" rx="3.4" ry="1.3" fill="#EAF4FC"/>
 <rect x="396" y="666" width="2" height="3" fill="#E8ECF8"/>
 <path d="M392.5 658 Q383.5 660 382.2 672.5" fill="none" stroke="#E8C038" stroke-width="2"/>
 <!-- import cert icon -->
 <rect x="653.5" y="658.5" width="11" height="13" fill="#E8F0FC" stroke="#5A78B0"/>
 <rect x="655.5" y="661" width="7" height="1" fill="#3A7AD8"/>
 <rect x="655.5" y="663.5" width="7" height="1" fill="#3A7AD8"/>
 <path d="M656 667 L658 669 L662 665" fill="none" stroke="#139A13" stroke-width="1.6"/>
 <!-- key icon -->
 <path d="M870 675 L877 668" stroke="#D8A838" stroke-width="2.4" stroke-linecap="round"/>
 <path d="M872 673 L874 675" stroke="#D8A838" stroke-width="1.6"/>
 <circle cx="880" cy="664" r="5" fill="#F8D878" stroke="#C89828" stroke-width="0.8"/>
 <circle cx="881" cy="663" r="1.3" fill="#C89828"/>
</svg>
<div class="t" style="left:34px;top:660px">加工制作单</div>
<div class="t" style="left:122px;top:660px">最近操作</div>
<div class="t" style="left:212px;top:660px;width:75px;overflow:hidden;letter-spacing:0.5px">账套：演示账套</div>
<div class="t" style="left:317px;top:660px">超级用户</div>
<div class="t" style="left:404px;top:660px">在线帮助</div>
<div class="a" style="left:472px;top:655px;width:171px;height:19px;border-top:1px solid #A0A4B0;border-left:1px solid #A0A4B0;border-right:1px solid #fff;border-bottom:1px solid #fff"></div>
<div class="t mono" style="left:480px;top:659px;color:#F00000;font-size:13px;letter-spacing:0">V2.1.0.286网络版 试用版</div>
<div class="t" style="left:672px;top:660px;color:#F00000">导入证书</div>
<div class="t" style="left:893px;top:660px">注销用户</div>

<!-- header labels -->
<div class="t hl" style="left:38px;top:70px">基础档案</div>
<div class="t hl" style="left:133px;top:70px">业务处理</div>
<div class="t hl" style="left:228px;top:70px">报表查询</div>
<div class="t hl" style="left:323px;top:70px">系统设置</div>
<div class="t hl" style="left:417px;top:70px">导入证书</div>
<div class="t" style="left:777px;top:7px;font-size:13px;letter-spacing:0;color:#fff">在线客服</div>

</body></html>
